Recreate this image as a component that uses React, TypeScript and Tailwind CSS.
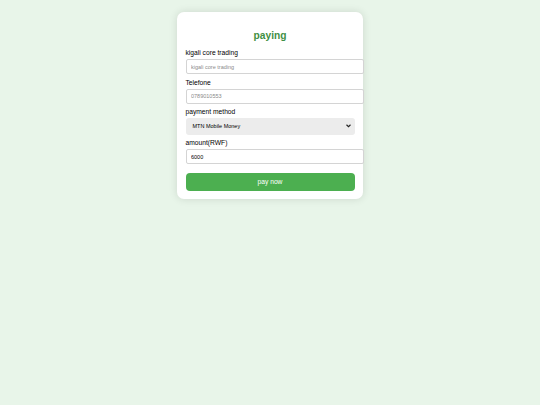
import React, { useState } from 'react';

const font = { fontFamily: '"Liberation Sans", Arial, sans-serif' };

export default function App() {
    const [name, setName] = useState('');
    const [phone, setPhone] = useState('');
    const [amount, setAmount] = useState('6000');

    return (
        <div className="min-h-[405px] w-full bg-[#e8f5e9] pt-[12px]" style={font}>
            <div className="mx-auto ml-[177px] w-[186px] rounded-[7px] bg-white px-[8.5px] pb-[8.3px] pt-[17.7px] shadow-[0_0_9px_rgba(0,0,0,0.12)]">
                <h2 className="mb-[7.8px] text-center text-[10.2px] font-bold leading-[12px] text-[#3f8f43]">paying</h2>

                <label className="mb-[1.9px] block text-[6.7px] leading-[8px] text-black">kigali core trading</label>
                <input
                    value={name}
                    onChange={e => setName(e.target.value)}
                    placeholder="kigali core trading"
                    className="mb-[4.6px] block h-[15px] w-[178px] rounded-[2px] border border-[#d4d4d4] px-[4.5px] text-[5.5px] text-black outline-none placeholder:text-[#8a8a8a]"
                />

                <label className="mb-[2px] block text-[6.7px] leading-[8px] text-black">Telefone</label>
                <input
                    value={phone}
                    onChange={e => setPhone(e.target.value)}
                    placeholder="0789010553"
                    className="mb-[4.5px] block h-[15px] w-[178px] rounded-[2px] border border-[#d4d4d4] px-[4.5px] text-[5.5px] text-black outline-none placeholder:text-[#8a8a8a]"
                />

                <label className="mb-[1.7px] block text-[6.7px] leading-[8px] text-black">payment method</label>
                <div className="mb-[4.6px] flex h-[16.4px] w-full items-center justify-between rounded-[3px] bg-[#ececec] pl-[7px] pr-[3px]">
                    <span className="text-[5.5px] text-black">MTN Mobile Money</span>
                    <svg width="5" height="4" viewBox="0 0 10 8" className="mr-[0.5px]">
                        <path d="M1 1.5 L5 5.5 L9 1.5" fill="none" stroke="#222" strokeWidth="2.2" />
                    </svg>
                </div>

                <label className="mb-[2px] block text-[6.7px] leading-[8px] text-black">amount(RWF)</label>
                <input
                    value={amount}
                    onChange={e => setAmount(e.target.value)}
                    className="mb-[8.4px] block h-[15px] w-[178px] rounded-[2px] border border-[#d4d4d4] px-[4.5px] text-[5.5px] text-black outline-none"
                />

                <button className="block h-[18px] w-full rounded-[4px] bg-[#4caf50] text-[6.7px] text-white">pay now</button>
            </div>
        </div>
    );
}
